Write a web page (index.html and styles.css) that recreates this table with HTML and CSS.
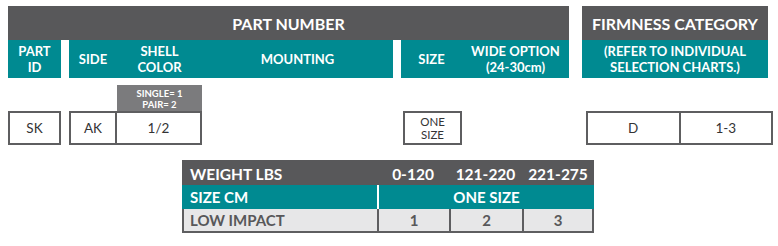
FILE: index.html
```html
<!DOCTYPE html>
<html lang="en">
<head>
<meta charset="utf-8">
<title>Part Number</title>
<link rel="stylesheet" href="styles.css">
</head>
<body>
<div class="page">
  <div class="spec">
    <div class="hd hd-part">PART NUMBER</div>
    <div class="hd hd-firm c-firm">FIRMNESS CATEGORY</div>

    <div class="sub c-id">PART<br>ID</div>
    <div class="sub c-side">SIDE</div>
    <div class="sub c-shell">SHELL<br>COLOR</div>
    <div class="sub c-mount">MOUNTING</div>
    <div class="sub c-size">SIZE</div>
    <div class="sub c-wide">WIDE OPTION<br>(24-30cm)</div>
    <div class="sub c-firm">(REFER TO INDIVIDUAL<br>SELECTION CHARTS.)</div>

    <div class="note c-shell">SINGLE= 1<br>PAIR= 2</div>

    <div class="box c-id">SK</div>
    <div class="box c-side">AK</div>
    <div class="box box-join c-shell">1/2</div>
    <div class="box box-size c-size">ONE<br>SIZE</div>
    <div class="box box-firm c-firm">
      <div class="firm-cell">D</div>
      <div class="firm-cell firm-cell-last">1-3</div>
    </div>
  </div>

  <div class="chart">
    <div class="ch ch-dark ch-label">WEIGHT LBS</div>
    <div class="ch ch-dark">0-120</div>
    <div class="ch ch-dark">121-220</div>
    <div class="ch ch-dark">221-275</div>

    <div class="ch ch-teal ch-label">SIZE CM</div>
    <div class="ch ch-teal ch-span">ONE SIZE</div>

    <div class="ch ch-light ch-label">LOW IMPACT</div>
    <div class="ch ch-light ch-cell">1</div>
    <div class="ch ch-light ch-cell">2</div>
    <div class="ch ch-light ch-cell ch-last">3</div>
  </div>
</div>
</body>
</html>
```

FILE: styles.css
```css
html, body {
  margin: 0;
  padding: 0;
  background: #ffffff;
}

.page {
  width: 778px;
  height: 246px;
  font-family: "Lato", "Liberation Sans", sans-serif;
  padding-top: 6px;
  box-sizing: border-box;
}

.spec {
  margin-left: 8px;
  display: grid;
  grid-template-columns: 53px 8px 48px 85px 191px 8px 61px 107px 13px 186px;
  grid-template-rows: 34px 38px 7px 26px 34px;
}

.hd {
  grid-row: 1;
  background: #58585a;
  color: #ffffff;
  font-weight: 700;
  font-size: 16px;
  display: flex;
  align-items: center;
  justify-content: center;
  padding-top: 1px;
}

.hd-part {
  grid-column: 1 / 9;
}

.sub {
  grid-row: 2;
  background: #008a91;
  color: #ffffff;
  font-weight: 700;
  font-size: 13px;
  line-height: 16px;
  text-align: center;
  display: flex;
  align-items: center;
  justify-content: center;
}

.c-id { grid-column: 1; }
.c-side { grid-column: 3; }
.c-shell { grid-column: 4; }
.c-mount { grid-column: 5; }
.c-size { grid-column: 7; }
.c-wide { grid-column: 8; }
.c-firm { grid-column: 10; }

.note {
  grid-row: 4;
  background: #7b7b7d;
  color: #ffffff;
  font-weight: 700;
  font-size: 9.5px;
  line-height: 11px;
  text-align: center;
  display: flex;
  align-items: center;
  justify-content: center;
  padding-top: 2px;
}

.box {
  grid-row: 5;
  border: 2px solid #5e5e60;
  box-sizing: border-box;
  color: #333335;
  font-size: 13.5px;
  display: flex;
  align-items: center;
  justify-content: center;
  text-align: center;
}

.box-join {
  border-left: none;
}

.box-size {
  margin-left: 2px;
  font-size: 11.5px;
  line-height: 13px;
}

.box-firm {
  margin-left: 4px;
  width: 187px;
  padding: 0;
  align-items: stretch;
}

.firm-cell {
  flex: 1;
  display: flex;
  align-items: center;
  justify-content: center;
  border-right: 2px solid #5e5e60;
}

.firm-cell-last {
  border-right: none;
}

.chart {
  margin-left: 182px;
  margin-top: 15px;
  width: 412px;
  display: grid;
  grid-template-columns: 195px 72px 73px 72px;
  grid-template-rows: 25px 24px 24px;
}

.ch {
  font-weight: 700;
  font-size: 15px;
  display: flex;
  align-items: center;
  justify-content: center;
  box-sizing: border-box;
}

.ch-label {
  justify-content: flex-start;
  padding-left: 8px;
}

.ch-dark {
  background: #58585a;
  color: #ffffff;
  font-size: 15.5px;
  padding-top: 2px;
}

.ch-teal {
  background: #008a91;
  color: #ffffff;
}

.ch-span {
  grid-column: 2 / 5;
  border-left: 2px solid #ffffff;
}

.ch-light {
  background: #e7e7e8;
  color: #58585a;
  border-bottom: 2px solid #5e5e60;
  border-left: 2px solid #5e5e60;
}

.ch-light.ch-label {
  padding-left: 6px;
}

.ch-last {
  border-right: 2px solid #5e5e60;
}
```
